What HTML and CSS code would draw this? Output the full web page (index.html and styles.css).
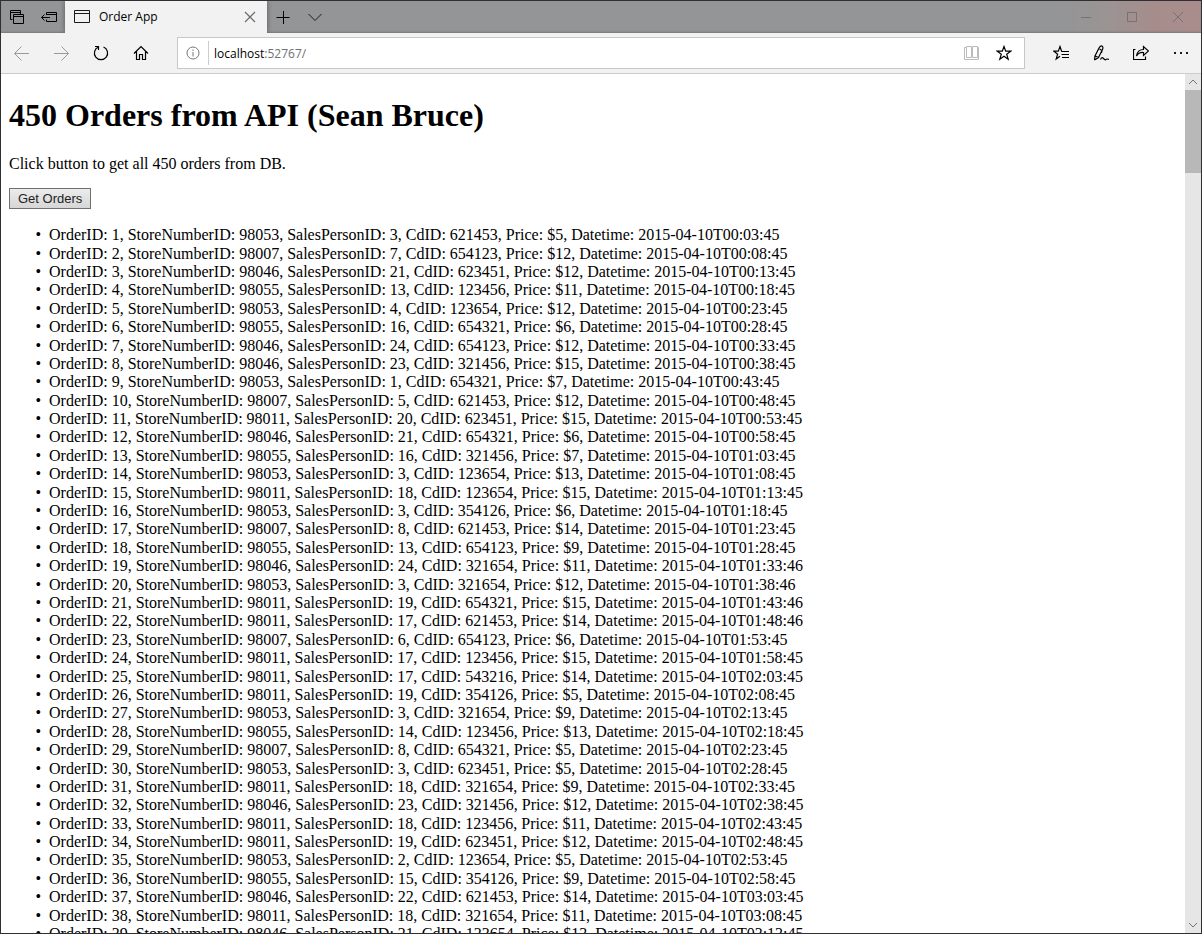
FILE: index.html
```html
<!DOCTYPE html>
<html lang="en">
<head>
<meta charset="utf-8">
<title>Order App</title>
<link rel="stylesheet" href="styles.css">
</head>
<body>
<div class="window">
  <header class="tabstrip">
    <button class="strip-btn" aria-label="Tabs you've set aside"><svg width="16" height="16" viewBox="0 0 16 16"><path class="solid" d="M3.500 10.500H1.500V1.500H11.500V5M1.500 3.500H11.500M4.500 5.500H14.500V14.500H4.500ZM4.500 7.500H14.500"/></svg></button>
    <button class="strip-btn" aria-label="Set these tabs aside"><svg width="16" height="16" viewBox="0 0 16 16"><path class="solid" d="M5.500 6V3.500H15.500V12.500H5.500V10.500M5.500 5.500H15.500M0.500 8.500H9M3.500 5.500L0.500 8.500L3.500 11.500"/></svg></button>
    <div class="tab">
      <svg width="16" height="14" viewBox="0 0 16 14"><path d="M0.500 0.500H15.500V12.500H0.500ZM0.500 3.500H15.500"/></svg>
      <span class="tab-title">Order App</span>
      <button class="tab-close" aria-label="Close tab"><svg width="12" height="12" viewBox="0 0 12 12"><path d="M1 1L11 11M11 1L1 11"/></svg></button>
    </div>
    <button class="strip-btn" aria-label="New tab"><svg width="14" height="14" viewBox="0 0 14 14"><path class="solid" d="M0.500 7.500H13.500M7.500 1V14"/></svg></button>
    <button class="strip-btn" aria-label="Show tab previews"><svg width="14" height="14" viewBox="0 0 14 14"><path d="M0.500 4L7 10.500L13.500 4"/></svg></button>
    <div class="caption">
      <button class="caption-btn" aria-label="Minimize"><svg width="10" height="10" viewBox="0 0 10 10"><path d="M0 5.500H10"/></svg></button>
      <button class="caption-btn" aria-label="Maximize"><svg width="10" height="10" viewBox="0 0 10 10"><path d="M0.500 0.500H9.500V9.500H0.500Z"/></svg></button>
      <button class="caption-btn" aria-label="Close"><svg width="10" height="10" viewBox="0 0 10 10"><path d="M0 0L10 10M10 0L0 10"/></svg></button>
    </div>
  </header>
  <nav class="toolbar">
    <div class="tools">
      <button class="tool off" aria-label="Back"><svg width="16" height="16" viewBox="0 0 16 16"><path d="M1.500 8.500H16M8.500 1.500L1.500 8.500L8.500 15.500"/></svg></button>
      <button class="tool off" aria-label="Forward"><svg width="16" height="16" viewBox="0 0 16 16"><path d="M1 8.500H15.500M8.500 1.500L15.500 8.500L8.500 15.500"/></svg></button>
      <button class="tool" aria-label="Refresh"><svg width="16" height="16" viewBox="0 0 16 16"><path class="bold" d="M10.500 2A6.600 6.600 0 1 1 5.500 2M2 1.500H5.500V5"/></svg></button>
      <button class="tool" aria-label="Home"><svg width="16" height="16" viewBox="0 0 16 16"><path class="bold" d="M1 8.500L8 1.500L15 8.500M3.500 6.500V14.500H6.500V9.500H9.500V14.500H12.500V6.500"/></svg></button>
    </div>
    <div class="address">
      <button class="info" aria-label="Site information"><svg width="14" height="14" viewBox="0 0 14 14"><circle cx="7" cy="7" r="6"/><path d="M7 6V10.500M7 3.500V5"/></svg></button>
      <label class="url"><span class="host">localhost</span>:52767/<input class="url-input" type="text" aria-label="Address"></label>
      <button class="field-btn read" aria-label="Reading view"><svg width="16" height="16" viewBox="0 0 16 16"><path d="M2.500 1.500H7.500V12.500H2.500ZM8.500 1.500H13.500V12.500H8.500ZM2.500 2.500H0.500V14.500H14.500V2.500H13.500"/></svg></button>
      <button class="field-btn" aria-label="Add to favorites"><svg width="16" height="16" viewBox="0 0 16 16"><path class="bold" d="M8 1.500L9.700 6.200H14.700L10.700 9.200L12.200 14.300L8 11.300L3.800 14.300L5.300 9.200L1.300 6.200H6.300Z"/></svg></button>
    </div>
    <div class="tools">
      <button class="tool" aria-label="Favorites hub"><svg width="16" height="16" viewBox="0 0 16 16"><path class="bold" d="M9.500 6.500L8.600 6.200L7 1.500L5.300 6.200H1L4.600 9.200L3.200 14L7 11.300M9 6.500H16M8.500 9.500H16M9 12.500H16"/></svg></button>
      <button class="tool" aria-label="Add notes"><svg width="16" height="16" viewBox="0 0 16 16"><path class="bold" d="M1.500 15L2 11L6 3Q7.500 0.500 9 1Q10.500 2 9.500 4.500L5.500 12.500L1.500 15M2 11L5.500 12.500M6.500 4L9 5.500L8.500 8M7.500 14.500Q8.500 11.500 10.500 13.500T13 14.500T16 14.500"/></svg></button>
      <button class="tool" aria-label="Share"><svg width="16" height="16" viewBox="0 0 16 16"><path class="bold" d="M2.500 4.500H0.500V14.500H12.500V11.500M3.500 11Q4.500 4.500 10.500 4.500V1.500L15.500 6L10.500 10.500V7.500Q6 7 3.500 11Z"/></svg></button>
      <button class="tool" aria-label="More"><svg width="16" height="16" viewBox="0 0 16 16"><path class="dots" d="M1 7H3V9H1ZM7 7H9V9H7ZM13 7H15V9H13Z"/></svg></button>
    </div>
  </nav>
  <div class="viewport">
    <main class="page">
      <h1>450 Orders from API (Sean Bruce)</h1>
      <p>Click button to get all 450 orders from DB.</p>
      <button class="get-orders">Get Orders</button>
      <ul class="orders">
        <li>OrderID: 1, StoreNumberID: 98053, SalesPersonID: 3, CdID: 621453, Price: $5, Datetime: 2015-04-10T00:03:45</li>
        <li>OrderID: 2, StoreNumberID: 98007, SalesPersonID: 7, CdID: 654123, Price: $12, Datetime: 2015-04-10T00:08:45</li>
        <li>OrderID: 3, StoreNumberID: 98046, SalesPersonID: 21, CdID: 623451, Price: $12, Datetime: 2015-04-10T00:13:45</li>
        <li>OrderID: 4, StoreNumberID: 98055, SalesPersonID: 13, CdID: 123456, Price: $11, Datetime: 2015-04-10T00:18:45</li>
        <li>OrderID: 5, StoreNumberID: 98053, SalesPersonID: 4, CdID: 123654, Price: $12, Datetime: 2015-04-10T00:23:45</li>
        <li>OrderID: 6, StoreNumberID: 98055, SalesPersonID: 16, CdID: 654321, Price: $6, Datetime: 2015-04-10T00:28:45</li>
        <li>OrderID: 7, StoreNumberID: 98046, SalesPersonID: 24, CdID: 654123, Price: $12, Datetime: 2015-04-10T00:33:45</li>
        <li>OrderID: 8, StoreNumberID: 98046, SalesPersonID: 23, CdID: 321456, Price: $15, Datetime: 2015-04-10T00:38:45</li>
        <li>OrderID: 9, StoreNumberID: 98053, SalesPersonID: 1, CdID: 654321, Price: $7, Datetime: 2015-04-10T00:43:45</li>
        <li>OrderID: 10, StoreNumberID: 98007, SalesPersonID: 5, CdID: 621453, Price: $12, Datetime: 2015-04-10T00:48:45</li>
        <li>OrderID: 11, StoreNumberID: 98011, SalesPersonID: 20, CdID: 623451, Price: $15, Datetime: 2015-04-10T00:53:45</li>
        <li>OrderID: 12, StoreNumberID: 98046, SalesPersonID: 21, CdID: 654321, Price: $6, Datetime: 2015-04-10T00:58:45</li>
        <li>OrderID: 13, StoreNumberID: 98055, SalesPersonID: 16, CdID: 321456, Price: $7, Datetime: 2015-04-10T01:03:45</li>
        <li>OrderID: 14, StoreNumberID: 98053, SalesPersonID: 3, CdID: 123654, Price: $13, Datetime: 2015-04-10T01:08:45</li>
        <li>OrderID: 15, StoreNumberID: 98011, SalesPersonID: 18, CdID: 123654, Price: $15, Datetime: 2015-04-10T01:13:45</li>
        <li>OrderID: 16, StoreNumberID: 98053, SalesPersonID: 3, CdID: 354126, Price: $6, Datetime: 2015-04-10T01:18:45</li>
        <li>OrderID: 17, StoreNumberID: 98007, SalesPersonID: 8, CdID: 621453, Price: $14, Datetime: 2015-04-10T01:23:45</li>
        <li>OrderID: 18, StoreNumberID: 98055, SalesPersonID: 13, CdID: 654123, Price: $9, Datetime: 2015-04-10T01:28:45</li>
        <li>OrderID: 19, StoreNumberID: 98046, SalesPersonID: 24, CdID: 321654, Price: $11, Datetime: 2015-04-10T01:33:46</li>
        <li>OrderID: 20, StoreNumberID: 98053, SalesPersonID: 3, CdID: 321654, Price: $12, Datetime: 2015-04-10T01:38:46</li>
        <li>OrderID: 21, StoreNumberID: 98011, SalesPersonID: 19, CdID: 654321, Price: $15, Datetime: 2015-04-10T01:43:46</li>
        <li>OrderID: 22, StoreNumberID: 98011, SalesPersonID: 17, CdID: 621453, Price: $14, Datetime: 2015-04-10T01:48:46</li>
        <li>OrderID: 23, StoreNumberID: 98007, SalesPersonID: 6, CdID: 654123, Price: $6, Datetime: 2015-04-10T01:53:45</li>
        <li>OrderID: 24, StoreNumberID: 98011, SalesPersonID: 17, CdID: 123456, Price: $15, Datetime: 2015-04-10T01:58:45</li>
        <li>OrderID: 25, StoreNumberID: 98011, SalesPersonID: 17, CdID: 543216, Price: $14, Datetime: 2015-04-10T02:03:45</li>
        <li>OrderID: 26, StoreNumberID: 98011, SalesPersonID: 19, CdID: 354126, Price: $5, Datetime: 2015-04-10T02:08:45</li>
        <li>OrderID: 27, StoreNumberID: 98053, SalesPersonID: 3, CdID: 321654, Price: $9, Datetime: 2015-04-10T02:13:45</li>
        <li>OrderID: 28, StoreNumberID: 98055, SalesPersonID: 14, CdID: 123456, Price: $13, Datetime: 2015-04-10T02:18:45</li>
        <li>OrderID: 29, StoreNumberID: 98007, SalesPersonID: 8, CdID: 654321, Price: $5, Datetime: 2015-04-10T02:23:45</li>
        <li>OrderID: 30, StoreNumberID: 98053, SalesPersonID: 3, CdID: 623451, Price: $5, Datetime: 2015-04-10T02:28:45</li>
        <li>OrderID: 31, StoreNumberID: 98011, SalesPersonID: 18, CdID: 321654, Price: $9, Datetime: 2015-04-10T02:33:45</li>
        <li>OrderID: 32, StoreNumberID: 98046, SalesPersonID: 23, CdID: 321456, Price: $12, Datetime: 2015-04-10T02:38:45</li>
        <li>OrderID: 33, StoreNumberID: 98011, SalesPersonID: 18, CdID: 123456, Price: $11, Datetime: 2015-04-10T02:43:45</li>
        <li>OrderID: 34, StoreNumberID: 98011, SalesPersonID: 19, CdID: 623451, Price: $12, Datetime: 2015-04-10T02:48:45</li>
        <li>OrderID: 35, StoreNumberID: 98053, SalesPersonID: 2, CdID: 123654, Price: $5, Datetime: 2015-04-10T02:53:45</li>
        <li>OrderID: 36, StoreNumberID: 98055, SalesPersonID: 15, CdID: 354126, Price: $9, Datetime: 2015-04-10T02:58:45</li>
        <li>OrderID: 37, StoreNumberID: 98046, SalesPersonID: 22, CdID: 621453, Price: $14, Datetime: 2015-04-10T03:03:45</li>
        <li>OrderID: 38, StoreNumberID: 98011, SalesPersonID: 18, CdID: 321654, Price: $11, Datetime: 2015-04-10T03:08:45</li>
        <li>OrderID: 39, StoreNumberID: 98046, SalesPersonID: 21, CdID: 123654, Price: $13, Datetime: 2015-04-10T03:13:45</li>
      </ul>
    </main>
    <div class="scrollbar">
      <button class="scroll-btn" aria-label="Scroll up"><svg width="10" height="6" viewBox="0 0 10 6"><path d="M1 5L5 1L9 5"/></svg></button>
      <div class="thumb"></div>
      <button class="scroll-btn" aria-label="Scroll down"><svg width="10" height="6" viewBox="0 0 10 6"><path d="M1 1L5 5L9 1"/></svg></button>
    </div>
  </div>
</div>
</body>
</html>
```
FILE: styles.css
```css
* { box-sizing: border-box; }

body {
  margin: 0;
  font-family: "Liberation Serif", "Times New Roman", serif;
  font-size: 16px;
  color: #000;
}

button {
  display: flex;
  align-items: center;
  justify-content: center;
  padding: 0;
  border: 0;
  background: none;
}

svg {
  display: block;
  fill: none;
  stroke: #1a1a1a;
  stroke-width: 1;
}

.solid { stroke: #000; }
.bold { stroke: #000; stroke-width: 1.2; }
.dots { fill: #1a1a1a; stroke: none; }

.window {
  display: flex;
  flex-direction: column;
  height: 100vh;
  border: 1px solid #302f33;
  overflow: hidden;
  background: #fff;
}

.tabstrip {
  display: flex;
  flex: none;
  height: 32px;
  background: linear-gradient(90deg, #949597 0, #949597 88%, #9a9493 92%, #a68d8c 96%, #a98d8c 100%);
  box-shadow: inset 0 -2px 2px -1px #77787a;
}

.strip-btn { width: 32px; }

.tab {
  display: flex;
  align-items: center;
  width: 202px;
  padding: 0 10px 0 9px;
  gap: 9px;
  background: #f2f2f2;
  box-shadow: 0 0 5px #555;
  clip-path: inset(0 -6px 0 -6px);
  font: 12px/16px "Open Sans", "Segoe UI", sans-serif;
}

.tab-title { flex: 1; }
.tab-close { width: 14px; height: 16px; }
.tab-close svg { stroke: #6a6a6a; stroke-width: 1.2; }

.caption { display: flex; margin-left: auto; }
.caption-btn { width: 46px; }
.caption-btn svg { stroke: #737373; }

.toolbar {
  display: flex;
  flex: none;
  align-items: center;
  gap: 16px;
  height: 41px;
  background: #f2f2f2;
  border-bottom: 1px solid #ccc;
}

.tools { display: flex; }
.tool { width: 40px; height: 40px; }
.off svg { stroke: #999; }

.address {
  display: flex;
  flex: 1;
  align-items: center;
  height: 32px;
  padding-right: 4px;
  background: #fff;
  border: 1px solid #c8c8c8;
  font: 12px/16px "Open Sans", "Segoe UI", sans-serif;
  color: #707070;
}

.info {
  width: 31px;
  height: 24px;
  border-right: 1px solid #ccc;
}

.info svg { stroke: #777; }

.url { display: flex; flex: 1; padding: 1px 0 0 5px; }
.host { color: #000; }
.url-input { flex: 1; min-width: 0; padding: 0; border: 0; outline: 0; font: inherit; }

.field-btn { width: 32px; height: 30px; }
.read svg { stroke: #bbb; }

.viewport { display: flex; flex: 1; min-height: 0; }

.page {
  flex: 1;
  min-width: 0;
  padding: 0 8px;
  overflow: hidden;
  line-height: 1.15;
}

h1 { margin: 23px 0 21px; font-size: 32px; }
p { margin: 0 0 15px; }

.get-orders {
  height: 21px;
  padding: 0 8px;
  border: 1px solid #707070;
  background: linear-gradient(#ececec, #d6d6d6);
  font: 13px/16px "Liberation Sans", Arial, sans-serif;
  color: #222;
}

.orders {
  margin: 17px 0;
  padding-left: 40px;
  list-style-type: "•\00a0\00a0";
}

.scrollbar {
  display: flex;
  flex: none;
  flex-direction: column;
  width: 16px;
  background: #e6e6e6;
}

.scroll-btn { width: 16px; height: 16px; }
.scroll-btn svg { stroke: #777; }
.scroll-btn:last-child { margin-top: auto; }
.thumb { height: 83px; background: #b8b8b8; }
```
